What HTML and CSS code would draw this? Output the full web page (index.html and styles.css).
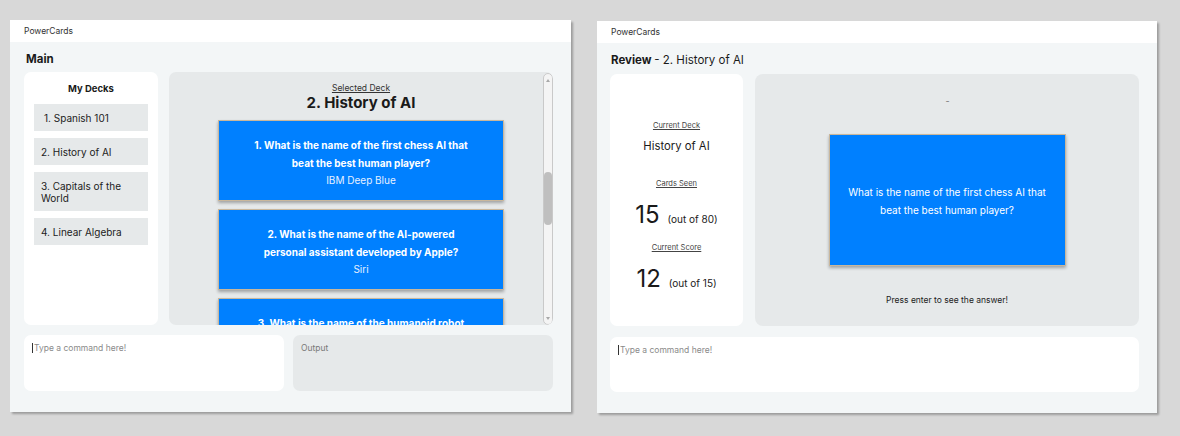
FILE: index.html
```html
<!DOCTYPE html>
<html lang="en">
<head>
<meta charset="utf-8">
<title>PowerCards</title>
<link rel="stylesheet" href="styles.css">
</head>
<body>
<div class="desk">
  <section class="win win-main">
    <header class="titlebar">PowerCards</header>
    <div class="win-body">
      <h1 class="page-title">Main</h1>
      <div class="main-row">
        <aside class="decks">
          <h2 class="decks-title">My Decks</h2>
          <ul class="deck-list">
            <li class="deck deck-first">1. Spanish 101</li>
            <li class="deck">2. History of AI</li>
            <li class="deck">3. Capitals of the World</li>
            <li class="deck">4. Linear Algebra</li>
          </ul>
        </aside>
        <div class="deck-view">
          <div class="deck-scroll">
            <div class="deck-label">Selected Deck</div>
            <div class="deck-name">2. History of AI</div>
            <div class="card-list">
              <div class="qcard">
                <p class="q">1. What is the name of the first chess AI that<br>beat the best human player?</p>
                <p class="a">IBM Deep Blue</p>
              </div>
              <div class="qcard">
                <p class="q">2. What is the name of the AI-powered<br>personal assistant developed by Apple?</p>
                <p class="a">Siri</p>
              </div>
              <div class="qcard">
                <p class="q">3. What is the name of the humanoid robot</p>
              </div>
            </div>
          </div>
          <div class="scrollbar">
            <div class="sb-btn"><span class="sb-up"></span></div>
            <div class="sb-thumb"></div>
            <div class="sb-btn sb-btn-end"><span class="sb-down"></span></div>
          </div>
        </div>
      </div>
      <div class="io-row">
        <div class="cmd"><span class="caret"></span>Type a command here!</div>
        <div class="output">Output</div>
      </div>
    </div>
  </section>

  <section class="win win-review">
    <header class="titlebar">PowerCards</header>
    <div class="win-body">
      <h1 class="page-title">Review <span class="sub">- 2. History of AI</span></h1>
      <div class="review-row">
        <aside class="stats">
          <div class="stat-label">Current Deck</div>
          <div class="stat-deck">History of AI</div>
          <div class="stat-label stat-gap">Cards Seen</div>
          <div class="stat-num"><span class="big">15</span><span class="of">(out of 80)</span></div>
          <div class="stat-label stat-gap2">Current Score</div>
          <div class="stat-num"><span class="big">12</span><span class="of">(out of 15)</span></div>
        </aside>
        <div class="review-area">
          <div class="dash">-</div>
          <div class="rcard">
            <p>What is the name of the first chess AI that<br>beat the best human player?</p>
          </div>
          <div class="hint">Press enter to see the answer!</div>
        </div>
      </div>
      <div class="io-row io-single">
        <div class="cmd"><span class="caret"></span>Type a command here!</div>
      </div>
    </div>
  </section>
</div>
</body>
</html>
```
FILE: styles.css
```css
* { box-sizing: border-box; margin: 0; padding: 0; }

body {
  background: #d8d8d8;
  font-family: Inter, "Noto Sans", sans-serif;
  color: #1a1a1a;
  width: 1180px;
  height: 436px;
  overflow: hidden;
}

.desk {
  display: flex;
  align-items: flex-start;
  gap: 26px;
  padding: 20px 0 0 10px;
}

.win {
  background: #f3f6f7;
  box-shadow: 2px 2px 2px rgba(0, 0, 0, 0.28);
  display: flex;
  flex-direction: column;
  height: 392px;
}
.win-main { width: 561px; }
.win-review { width: 560px; margin-top: 1px; }

.titlebar {
  height: 22px;
  background: #fff;
  font-size: 8.5px;
  line-height: 22px;
  padding-left: 14px;
  color: #333;
}

.win-body {
  flex: 1;
  display: flex;
  flex-direction: column;
  padding: 9px 18px 0 14px;
}
.win-review .win-body { padding-left: 13px; }

.page-title {
  font-size: 11.5px;
  font-weight: 700;
  line-height: 16px;
  margin-bottom: 5px;
}
.win-main .page-title { padding-left: 2px; }
.win-review .page-title { margin-bottom: 6px; padding-left: 1px; }
.page-title .sub { font-weight: 400; }

/* ---------- Main window ---------- */
.main-row {
  display: flex;
  gap: 11px;
  height: 253px;
}

.decks {
  width: 134px;
  background: #fff;
  border-radius: 7px;
  padding: 11px 10px 0;
}
.decks-title {
  font-size: 9.5px;
  font-weight: 700;
  text-align: center;
  line-height: 12px;
  margin-bottom: 9px;
}
.deck-list {
  list-style: none;
  display: flex;
  flex-direction: column;
  gap: 7px;
}
.deck {
  background: #e6e9ea;
  font-size: 10px;
  line-height: 12px;
  padding: 7.5px 7px;
  color: #222;
}
.deck-first { padding-left: 10px; }

.deck-view {
  position: relative;
  flex: 1;
  background: #e6e9ea;
  border-radius: 7px;
  overflow: hidden;
}
.deck-scroll {
  padding-top: 10px;
  text-align: center;
}
.deck-label {
  font-size: 8.5px;
  line-height: 12px;
  text-decoration: underline;
  color: #333;
}
.deck-name {
  font-size: 15px;
  font-weight: 700;
  line-height: 18px;
  margin-bottom: 8px;
}
.card-list {
  display: flex;
  flex-direction: column;
  align-items: center;
  gap: 8px;
}
.qcard {
  width: 286px;
  height: 81px;
  flex: none;
  padding-top: 15px;
  background: #0080ff;
  border: 1px solid #c9b79c;
  box-shadow: 0 2px 3px rgba(0, 0, 0, 0.3);
  color: #fff;
}
.q {
  font-weight: 700;
  font-size: 10px;
  line-height: 18px;
}
.a {
  font-size: 10px;
  line-height: 16px;
  color: #e6f0ff;
}

.scrollbar {
  position: absolute;
  top: 1px;
  right: 0;
  bottom: 0;
  width: 10px;
  border: 1px solid #c9c9c9;
  border-radius: 5px;
  background: #f4f4f4;
  display: flex;
  flex-direction: column;
}
.sb-btn {
  height: 12px;
  display: flex;
  justify-content: center;
  align-items: center;
}
.sb-btn-end { margin-top: auto; }
.sb-up, .sb-down {
  width: 0;
  height: 0;
  border-left: 2.5px solid transparent;
  border-right: 2.5px solid transparent;
}
.sb-up { border-bottom: 3px solid #a8a8a8; }
.sb-down { border-top: 3px solid #a8a8a8; }
.sb-thumb {
  margin-top: 86px;
  height: 53px;
  background: #bfbfbf;
  border-radius: 4px;
}

.io-row {
  display: grid;
  grid-template-columns: 1fr 1fr;
  gap: 9px;
  height: 56px;
  margin-top: 10px;
}
.cmd, .output {
  border-radius: 7px;
  padding: 8px;
  font-size: 8.5px;
  line-height: 10px;
}
.cmd { background: #fff; color: #8a8a8a; }
.output { background: #e6e9ea; color: #7a7a7a; }
.caret {
  display: inline-block;
  width: 1px;
  height: 10px;
  background: #333;
  vertical-align: top;
  margin-right: 1px;
}

/* ---------- Review window ---------- */
.review-row {
  display: flex;
  gap: 12px;
  height: 252px;
}
.stats {
  width: 133px;
  background: #fff;
  border-radius: 7px;
  padding-top: 47px;
  text-align: center;
}
.stat-label {
  font-size: 7.5px;
  line-height: 10px;
  text-decoration: underline;
  color: #444;
}
.stat-deck {
  font-size: 11.3px;
  line-height: 15px;
  margin-top: 8px;
}
.stat-gap { margin-top: 25px; }
.stat-gap2 { margin-top: 10px; }
.stat-num {
  display: flex;
  justify-content: center;
  align-items: baseline;
  gap: 8px;
  margin-top: 12px;
  line-height: 28px;
}
.big { font-size: 24px; }
.of { font-size: 10px; }

.review-area {
  flex: 1;
  background: #e6e9ea;
  border-radius: 8px;
  padding-top: 21px;
  display: flex;
  flex-direction: column;
  align-items: center;
}
.dash {
  font-size: 9px;
  line-height: 12px;
  color: #777;
  padding-left: 1px;
}
.rcard {
  width: 237px;
  height: 132px;
  margin-top: 27px;
  padding-top: 1px;
  background: #0080ff;
  border: 1px solid #c9b79c;
  box-shadow: 0 2px 3px rgba(0, 0, 0, 0.3);
  color: #fff;
  display: flex;
  align-items: center;
  justify-content: center;
  text-align: center;
  font-size: 10px;
  line-height: 18px;
}
.hint {
  margin-top: 28px;
  font-size: 8.5px;
  line-height: 12px;
  color: #222;
}

.io-single {
  grid-template-columns: 1fr;
  height: 55px;
  margin-top: 11px;
}
```
